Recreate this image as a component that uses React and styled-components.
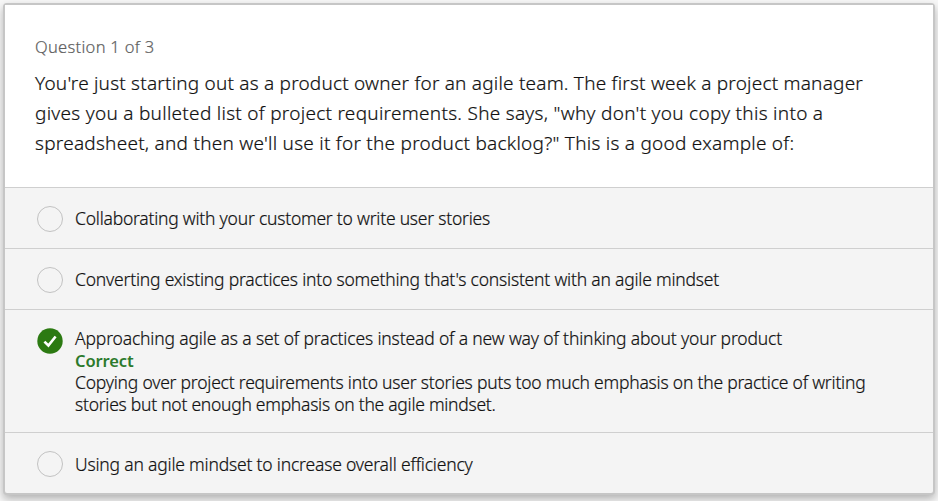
import React from "react";
import styled, { createGlobalStyle } from "styled-components";

const GlobalStyle = createGlobalStyle`
  * { box-sizing: border-box; }
  body { margin: 0; background: #f7f7f7; font-family: "Noto Sans", "Open Sans", sans-serif; color: #111; overflow: hidden; }
`;

const Page = styled.main`
  height: 501px;
  padding: 3px 3px 6px 3px;
`;

const Card = styled.section`
  display: flex;
  flex-direction: column;
  width: 932px;
  height: 492px;
  background: #f4f4f4;
  border: 2px solid #c6c6c6;
  border-radius: 4px;
  box-shadow: 0 4px 8px rgba(0, 0, 0, 0.28);
`;

const Header = styled.header`
  height: 182px;
  padding: 30px 30px 0;
  background: #fff;
`;

const Line = styled.span`
  display: block;
  width: max-content;
  white-space: nowrap;
  font-size: ${(p) => p.$size}px;
  font-weight: 300;
  line-height: ${(p) => p.$leading}px;
  letter-spacing: ${(p) => p.$track || 0}px;
  color: ${(p) => p.$color || "#111"};
  -webkit-text-stroke: 0.2px currentColor;
`;

const Verdict = styled.strong`
  display: block;
  margin-bottom: -2px;
  font-size: 16.5px;
  font-weight: 600;
  line-height: 24px;
  letter-spacing: -0.1px;
  color: #2c7a2c;
`;

const Heading = styled.h1`
  margin: 9px 0 0;
`;

const Option = styled.div`
  display: flex;
  height: ${(p) => p.$height}px;
  padding: ${(p) => p.$top}px 32px 0;
  border-top: 1px solid #cfcfcf;
`;

const Radio = styled.span`
  flex: none;
  width: 26px;
  height: 26px;
  border: 1px solid #c2c2c2;
  border-radius: 50%;
`;

const Check = styled.svg`
  flex: none;
  width: 26px;
  height: 26px;
`;

const Copy = styled.div`
  margin: ${(p) => p.$shift}px 0 0 12px;
`;

const question = [
  { track: 0.21, text: "You're just starting out as a product owner for an agile team. The first week a project manager" },
  { track: 0.28, text: "gives you a bulleted list of project requirements. She says, \"why don't you copy this into a" },
  { track: 0.25, text: "spreadsheet, and then we'll use it for the product backlog?\" This is a good example of:" },
];

function Answer({ track = -0.225, shift = 1, children }) {
  return (
    <Option $height={61} $top={18}>
      <Radio />
      <Copy $shift={shift}>
        <Line $size={17.5} $leading={22} $track={track}>{children}</Line>
      </Copy>
    </Option>
  );
}

export default function App() {
  return (
    <Page>
      <GlobalStyle />
      <Card>
        <Header>
          <Line $size={16.5} $leading={24} $track={0.3} $color="#606060">Question 1 of 3</Line>
          <Heading>
            {question.map(({ track, text }) => (
              <Line key={text} $size={19} $leading={30} $track={track}>{text}</Line>
            ))}
          </Heading>
        </Header>
        <Answer>Collaborating with your customer to write user stories</Answer>
        <Answer track={-0.205}>Converting existing practices into something that's consistent with an agile mindset</Answer>
        <Option $height={123} $top={18}>
          <Check viewBox="0 0 26 26">
            <circle cx="13" cy="13" r="12.7" fill="#2c7a12" />
            <path d="M7.4 13.6l4 3.9 7.2-9" fill="none" stroke="#fff" strokeWidth="2.6" />
          </Check>
          <Copy $shift={-1}>
            <Line $size={17.5} $leading={22} $track={-0.155}>Approaching agile as a set of practices instead of a new way of thinking about your product</Line>
            <Verdict>Correct</Verdict>
            <Line $size={17.5} $leading={22} $track={-0.215}>Copying over project requirements into user stories puts too much emphasis on the practice of writing</Line>
            <Line $size={17.5} $leading={22} $track={-0.26}>stories but not enough emphasis on the agile mindset.</Line>
          </Copy>
        </Option>
        <Answer track={-0.19} shift={2}>Using an agile mindset to increase overall efficiency</Answer>
      </Card>
    </Page>
  );
}
